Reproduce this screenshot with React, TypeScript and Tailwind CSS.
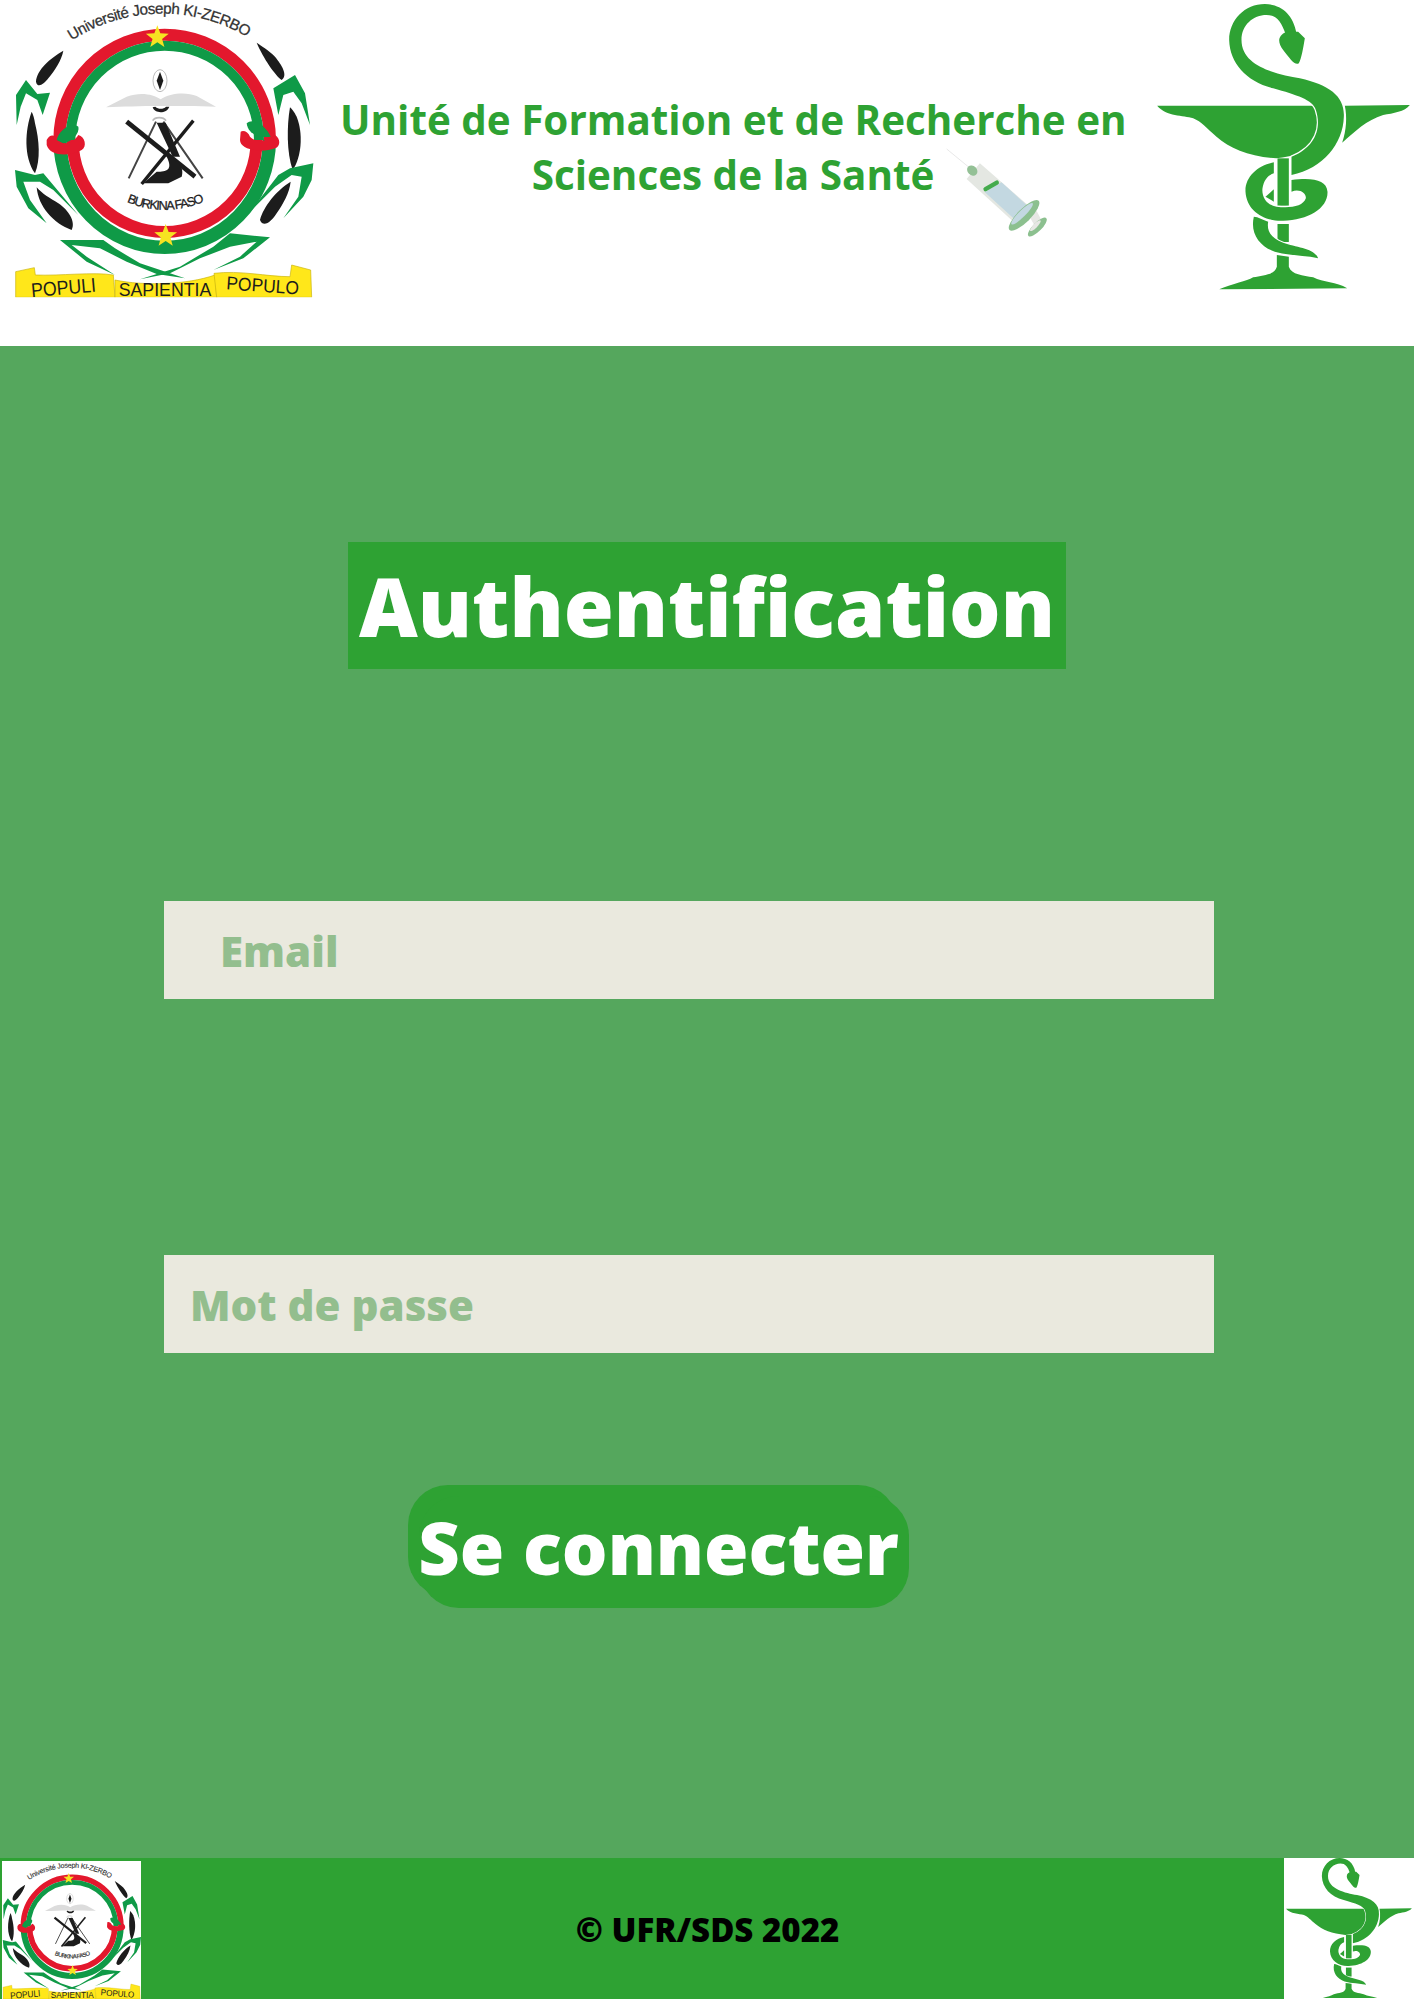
const star = (x: number, y: number, r: number) => {
  const pts: string[] = [];
  for (let i = 0; i < 10; i++) {
    const a = -Math.PI / 2 + (i * Math.PI) / 5;
    const rad = i % 2 === 0 ? r : r * 0.42;
    pts.push(`${(x + rad * Math.cos(a)).toFixed(1)},${(y + rad * Math.sin(a)).toFixed(1)}`);
  }
  return pts.join(' ');
};

function Crest({ className, viewBox, id }: { className?: string; viewBox: string; id: string }) {
  const green = '#0f9a47';
  const red = '#e3182d';
  const black = '#1c1c1c';
  const yellow = '#ffe71a';
  return (
    <svg viewBox={viewBox} className={className} fontFamily="'Liberation Sans', sans-serif">
      <defs>
        <path id={`${id}-top`} d="M215 122 A495 495 0 0 1 742 112" />
        <path id={`${id}-bf`} d="M380 606 Q500 656 622 600" />
        <clipPath id={`${id}-clip`}><rect x="0" y="0" width="1020" height="892" /></clipPath>
      </defs>
      <g clipPath={`url(#${id}-clip)`}>
        <text fontSize="46" fill="#333" stroke="#333" strokeWidth="0.8">
          <textPath href={`#${id}-top`} textLength="555">Université Joseph KI-ZERBO</textPath>
        </text>

        {/* ring */}
        <path d="M178 420 A316 316 0 0 1 810 420" fill="none" stroke={red} strokeWidth="36" />
        <path d="M211 420 A283 283 0 0 1 777 420" fill="none" stroke={green} strokeWidth="30" />
        <path d="M180 420 A312 320 0 0 0 808 420" fill="none" stroke={green} strokeWidth="40" />
        <path d="M218 420 A275 275 0 0 0 770 420" fill="none" stroke={red} strokeWidth="36" />

        {/* knots */}
        <path d="M140 420 C150 400 165 405 170 415 C190 440 220 430 235 405 C255 410 262 440 245 450 C210 470 150 470 140 435 Z" fill={red} />
        <path d="M170 420 C175 390 215 365 235 380 C240 400 215 425 190 430 Z" fill={green} />
        <path d="M722 395 C730 390 745 395 750 410 C770 430 800 425 825 405 C842 415 842 440 825 445 C785 460 720 450 720 420 Z" fill={red} />
        <path d="M740 370 C760 350 800 380 812 410 C780 415 745 405 740 370 Z" fill={green} />
        <polygon points={star(472, 112, 36)} fill="#f6e321" />
        <polygon points={star(497, 708, 36)} fill="#f6e321" />

        {/* black leaves */}
        <path d="M190 152 C150 175 110 210 108 245 C112 265 130 255 145 235 C165 210 185 180 190 152 Z" fill={black} />
        <path d="M95 335 C75 390 70 470 105 520 C122 480 118 420 105 370 C103 355 100 345 95 335 Z" fill={black} />
        <path d="M110 562 C115 620 160 670 215 690 C228 665 205 630 175 610 C150 595 125 580 110 562 Z" fill={black} />
        <path d="M770 128 C790 175 825 225 845 240 C865 225 845 195 825 170 C805 150 785 138 770 128 Z" fill={black} />
        <path d="M870 322 C860 380 860 460 878 510 C905 470 910 400 890 350 C882 335 876 328 870 322 Z" fill={black} />
        <path d="M872 545 C830 570 790 620 780 660 C790 685 815 665 830 640 C850 610 868 580 872 545 Z" fill={black} />

        {/* green zigzags */}
        <path d="M50 375 L48 285 L78 240 L112 282 L150 278 L128 345 L112 300 L78 280 L62 320 Z" fill={green} />
        <path d="M45 510 L105 525 L130 520 L235 645 L160 570 L120 545 L70 545 L90 600 L140 670 L85 625 L50 560 Z" fill={green} />
        <path d="M930 375 L915 280 L885 225 L820 265 L835 345 L850 285 L880 275 L905 310 Z" fill={green} />
        <path d="M940 490 L870 505 L835 525 L750 635 L825 560 L875 525 L905 530 L895 590 L850 655 L910 590 L935 540 Z" fill={green} />
        <path d="M180 720 L310 720 L345 745 L420 790 L555 835 L470 822 L380 785 L300 745 L215 735 L260 770 L345 825 L260 785 Z" fill={green} />
        <path d="M810 712 L690 700 L640 740 L540 800 L420 838 L510 820 L600 775 L690 740 L770 725 L720 770 L640 810 L730 775 Z" fill={green} />

        {/* emblem */}
        <ellipse cx="480" cy="242" rx="21" ry="33" fill="#fff" stroke="#999" strokeWidth="2" />
        <path d="M480 215 L490 242 L480 270 L470 242 Z" fill={black} />
        <path d="M318 322 L380 290 C420 275 460 282 482 298 C510 278 560 275 590 288 L648 320 C590 318 530 318 482 318 C420 318 370 320 318 322 Z" fill="#dcdcdc" />
        <path d="M458 322 C465 342 500 342 508 320 L498 320 C490 328 475 328 466 320 Z" fill={black} />
        <path d="M458 362 C465 350 490 350 498 362" stroke="#bbb" strokeWidth="5" fill="none" />
        <path d="M468 365 L386 535 M490 365 L608 535" stroke="#444" strokeWidth="6" fill="none" />
        <path d="M380 365 L585 530" stroke={black} strokeWidth="14" />
        <path d="M425 552 L580 362" stroke={black} strokeWidth="10" />
        <path d="M470 368 L497 368 L540 470 L518 470 Z" fill={black} />
        <path d="M500 470 C530 480 555 500 545 530 L505 550 L430 550 L470 515 C500 515 520 510 500 470 Z" fill={black} />
        <text fontSize="38" fill={black} stroke={black} strokeWidth="0.8">
          <textPath href={`#${id}-bf`} textLength="240">BURKINA FASO</textPath>
        </text>

        {/* ribbon */}
        <path d="M47 815 L103 803 L106 825 C180 828 280 815 340 825 L345 892 L47 892 Z" fill={yellow} stroke="#c9b30f" strokeWidth="2" />
        <path d="M345 840 C430 858 560 855 645 825 L650 892 L345 892 Z" fill={yellow} stroke="#c9b30f" strokeWidth="2" />
        <path d="M642 820 C720 810 800 830 870 830 L875 795 L932 810 L935 892 L650 892 Z" fill={yellow} stroke="#c9b30f" strokeWidth="2" />
        <text x="95" y="892" fontSize="60" fill={black} transform="rotate(-5 95 892)" textLength="195" lengthAdjust="spacingAndGlyphs">POPULI</text>
        <text x="356" y="887" fontSize="54" fill={black} textLength="278" lengthAdjust="spacingAndGlyphs">SAPIENTIA</text>
        <text x="678" y="868" fontSize="56" fill={black} transform="rotate(4 678 868)" textLength="218" lengthAdjust="spacingAndGlyphs">POPULO</text>
      </g>
    </svg>
  );
}

function Bowl({ className, viewBox }: { className?: string; viewBox: string }) {
  const c = '#2ea233';
  return (
    <svg viewBox={viewBox} className={className}>
      <path d="M772 317 L1240 317 C1262 350 1265 395 1235 430 C1210 460 1180 470 1130 475 C1050 470 990 445 950 410 C920 385 905 365 880 355 C850 345 800 350 772 317 Z" fill={c} />
      <path d="M1335 317 L1530 315 C1515 335 1480 340 1450 345 C1400 360 1365 395 1327 428 C1340 390 1342 350 1335 317 Z" fill={c} />
      <rect x="1133" y="475" width="34" height="142" fill={c} />
      <rect x="1133" y="672" width="34" height="54" fill={c} />
      <path d="M958 868 C1000 850 1040 845 1060 832 C1090 825 1125 825 1131 800 L1131 765 L1167 770 L1167 800 C1175 825 1210 825 1240 832 C1270 848 1310 845 1342 865 Z" fill={c} />
      <path d="M1190 100 C1180 40 1140 12 1095 12 C1035 12 988 60 988 120 C990 190 1040 245 1120 265 C1190 285 1240 300 1248 330 C1265 380 1250 440 1175 470 L1175 525 C1270 505 1330 430 1332 350 C1335 290 1290 255 1200 235 C1130 222 1025 200 1025 120 C1025 75 1060 45 1100 45 C1130 45 1145 65 1158 105 Z" fill={c} stroke="#fff" strokeWidth="7" paintOrder="stroke" />
      <path d="M1138 120 C1140 105 1150 100 1160 95 L1195 95 L1215 115 C1210 145 1205 175 1197 190 C1185 198 1170 175 1150 150 C1142 140 1138 130 1138 120 Z" fill={c} />
      <path d="M1122 487 C1075 495 1035 530 1037 575 C1040 630 1090 665 1150 662 C1225 660 1285 625 1283 575 C1280 540 1240 532 1175 540 L1175 575 C1200 565 1220 580 1218 595 C1210 620 1170 625 1130 620 C1100 615 1085 590 1088 565 C1092 540 1105 525 1122 520 Z" fill={c} stroke="#fff" strokeWidth="7" paintOrder="stroke" />
      <path d="M1097 590 L1122 568 L1122 605 Z" fill={c} />
      <path d="M1062 650 C1075 650 1090 660 1105 665 C1100 695 1115 715 1150 728 C1190 742 1245 745 1255 775 C1215 765 1170 768 1125 755 C1080 740 1050 700 1062 650 Z" fill={c} stroke="#fff" strokeWidth="6" paintOrder="stroke" />
    </svg>
  );
}

function Syringe({ className }: { className?: string }) {
  return (
    <svg viewBox="130 440 310 275" className={className}>
      <line x1="135" y1="445" x2="202" y2="500" stroke="#dcdcdc" strokeWidth="2" />
      <path d="M195 535 L235 488 L392 625 L345 672 Z" fill="#e4e7e2" />
      <path d="M250 575 L300 545 L388 625 L345 662 Z" fill="#c3d8e1" />
      <ellipse cx="212" cy="510" rx="14" ry="17" transform="rotate(-45 212 510)" fill="#93c095" />
      <line x1="252" y1="566" x2="286" y2="546" stroke="#44ab4d" strokeWidth="13" strokeLinecap="round" />
      <path d="M385 650 L405 630 L425 668 L405 685 Z" fill="#e7e7e4" />
      <ellipse cx="368" cy="645" rx="62" ry="20" transform="rotate(-45 368 645)" fill="#8cc08f" />
      <ellipse cx="362" cy="640" rx="45" ry="10" transform="rotate(-45 362 640)" fill="#c3d8e1" />
      <ellipse cx="408" cy="680" rx="38" ry="13" transform="rotate(-45 408 680)" fill="#8cc08f" />
      <ellipse cx="402" cy="676" rx="22" ry="6" transform="rotate(-45 402 676)" fill="#e7e7e4" />
    </svg>
  );
}

export default function App() {
  return (
    <div className="w-[1414px] bg-white font-['Open_Sans',sans-serif]">
      <header className="h-[346px] flex items-start bg-white">
        <Crest id="head" viewBox="0 0 1020 900" className="w-[340px] h-[300px] shrink-0" />
        <div className="relative w-[786px] h-[346px] pt-[92px] text-center text-[40.4px] leading-[55px] font-bold text-[#2ea233] whitespace-nowrap">
          <p>Unité de Formation et de Recherche en</p>
          <p>Sciences de la Santé</p>
          <Syringe className="absolute left-[605px] top-[147px] w-[103px] h-[92px]" />
        </div>
        <Bowl viewBox="760 0 782 960" className="ml-[27px] w-[261px] h-[320px]" />
      </header>

      <main className="h-[1512px] bg-[#55a75d] flex flex-col">
        <h1 className="self-center mt-[196px] w-[718px] h-[127px] bg-[#2ea233] text-white text-center text-[81px] leading-[127px] font-extrabold">
          Authentification
        </h1>
        <div className="ml-[164px] mt-[232px] w-[1050px] h-[98px] bg-[#eae9de] pl-[56px] text-[42px] leading-[100px] font-extrabold text-[#93be8e]">
          Email
        </div>
        <div className="ml-[164px] mt-[256px] w-[1050px] h-[98px] bg-[#eae9de] pl-[26px] text-[42px] leading-[100px] font-extrabold text-[#93be8e]">
          Mot de passe
        </div>
        <button className="relative ml-[408px] mt-[132px] w-[501px] h-[123px] text-white text-center text-[72px] leading-[118px] font-extrabold">
          <span className="absolute left-0 top-0 w-[490px] h-[112px] rounded-[40px] bg-[#2ea233]" />
          <span className="absolute right-0 bottom-0 w-[490px] h-[112px] rounded-[40px] bg-[#2ea233]" />
          <span className="relative">Se connecter</span>
        </button>
      </main>

      <footer className="h-[141px] bg-[#2ea233] flex items-stretch">
        <div className="ml-[2px] mt-[3px] w-[139px] bg-white overflow-hidden">
          <Crest id="foot" viewBox="40 0 900 890" className="w-[139px] h-[138px]" />
        </div>
        <p className="flex-1 self-center text-center text-[33px] font-extrabold text-black pr-[10px] pt-[2px]">© UFR/SDS 2022</p>
        <div className="w-[130px] bg-white overflow-hidden">
          <Bowl viewBox="760 12 783 843" className="w-[130px] h-[140px]" />
        </div>
      </footer>
    </div>
  );
}
